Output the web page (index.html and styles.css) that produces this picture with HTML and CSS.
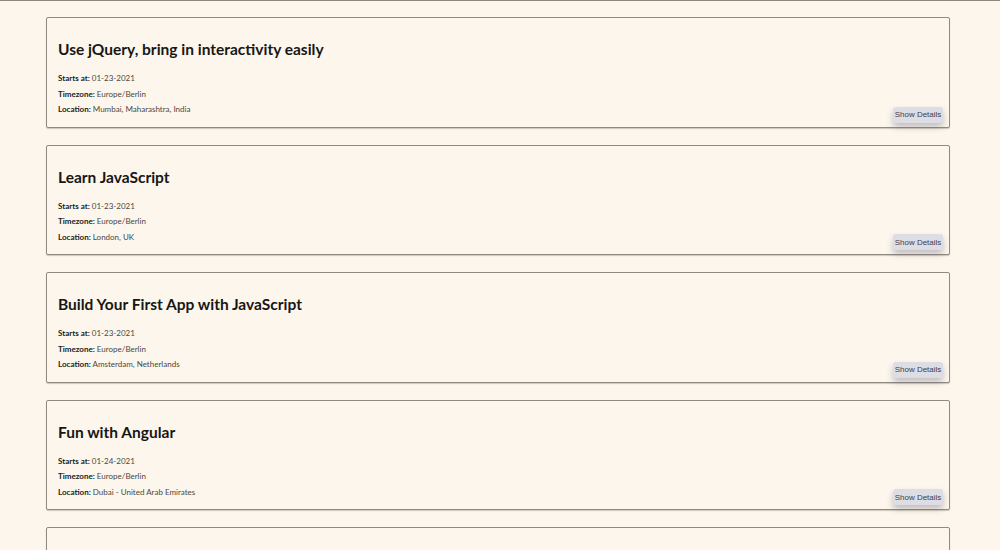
FILE: index.html
```html
<!DOCTYPE html>
<html lang="en">
<head>
<meta charset="utf-8">
<title>Events</title>
<link rel="stylesheet" href="styles.css">
</head>
<body>
<div class="topbar"></div>
<main class="list">
  <article class="card">
    <h2 class="title">Use jQuery, bring in interactivity easily</h2>
    <div class="details">
      <p><b>Starts at:</b> 01-23-2021</p>
      <p><b>Timezone:</b> Europe/Berlin</p>
      <p><b>Location:</b> Mumbai, Maharashtra, India</p>
    </div>
    <button class="btn">Show Details</button>
  </article>
  <article class="card">
    <h2 class="title">Learn JavaScript</h2>
    <div class="details">
      <p><b>Starts at:</b> 01-23-2021</p>
      <p><b>Timezone:</b> Europe/Berlin</p>
      <p><b>Location:</b> London, UK</p>
    </div>
    <button class="btn">Show Details</button>
  </article>
  <article class="card">
    <h2 class="title">Build Your First App with JavaScript</h2>
    <div class="details">
      <p><b>Starts at:</b> 01-23-2021</p>
      <p><b>Timezone:</b> Europe/Berlin</p>
      <p><b>Location:</b> Amsterdam, Netherlands</p>
    </div>
    <button class="btn">Show Details</button>
  </article>
  <article class="card">
    <h2 class="title">Fun with Angular</h2>
    <div class="details">
      <p><b>Starts at:</b> 01-24-2021</p>
      <p><b>Timezone:</b> Europe/Berlin</p>
      <p><b>Location:</b> Dubai - United Arab Emirates</p>
    </div>
    <button class="btn">Show Details</button>
  </article>
  <article class="card card-partial">
  </article>
</main>
</body>
</html>
```
FILE: styles.css
```css
html, body {
  margin: 0;
  padding: 0;
  background: #fdf6ed;
}
body {
  font-family: "Lato", "Noto Sans", sans-serif;
  color: #1c1b19;
  height: 550px;
  overflow: hidden;
}
.topbar {
  border-top: 1px solid #8c877e;
}
.list {
  width: 904px;
  margin: 0 0 0 46px;
  padding-top: 16px;
  display: flex;
  flex-direction: column;
  gap: 17px;
}
.card {
  display: grid;
  grid-template-columns: 1fr auto;
  border: 1px solid #8f8a82;
  border-radius: 2px;
  background: #fdf6ed;
  box-shadow: 0 1px 1px rgba(120, 110, 95, 0.35);
  padding: 21px 6px 5px 11px;
  height: 110.5px;
  flex-shrink: 0;
  box-sizing: border-box;
}
.title {
  grid-column: 1 / 3;
  margin: 0 0 8px;
  font-size: 15.5px;
  line-height: 20px;
  font-weight: 700;
  color: #171614;
}
.details {
  grid-column: 1;
  font-size: 8px;
  line-height: 15.5px;
  color: #4a4742;
}
.details p {
  margin: 0;
}
.details b {
  font-weight: 700;
  color: #1c1b19;
}
.btn {
  grid-column: 2;
  align-self: end;
  margin-bottom: -1px;
  font-family: "Liberation Sans", Arial, sans-serif;
  font-size: 8px;
  color: #3f3f46;
  background: #dddde6;
  border: none;
  border-radius: 3px;
  height: 16px;
  width: 50px;
  padding: 0;
  box-shadow: 0 4px 6px rgba(90, 90, 110, 0.35);
}
```
